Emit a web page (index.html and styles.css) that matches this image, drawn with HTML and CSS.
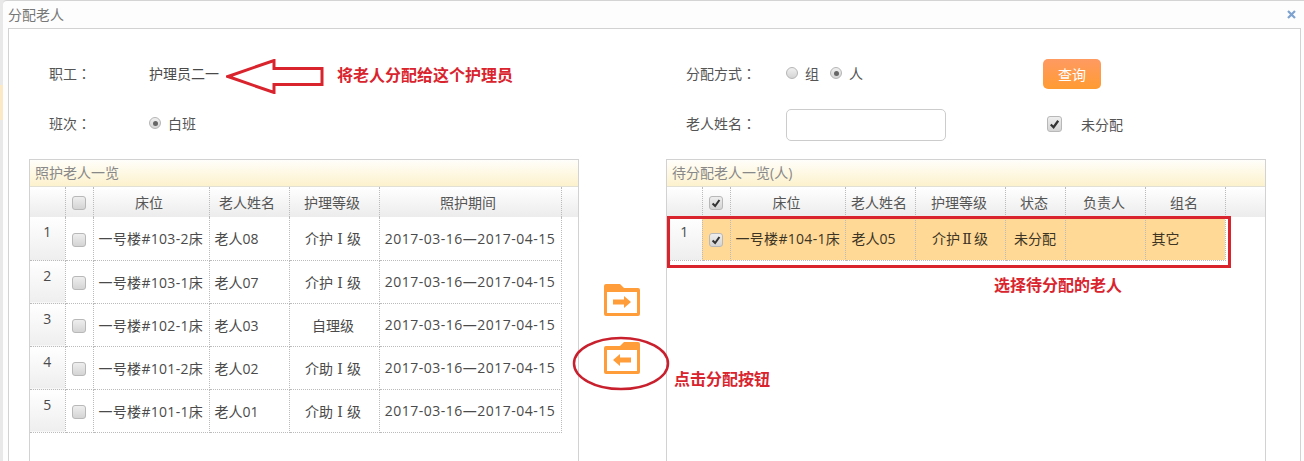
FILE: index.html
```html
<!DOCTYPE html>
<html lang="zh-CN">
<head>
<meta charset="utf-8">
<title>分配老人</title>
<link rel="stylesheet" href="styles.css">
</head>
<body>
<div class="backdrop-accent"></div>
<div class="window">
  <div class="titlebar">
    <span class="window-title">分配老人</span>
    <svg class="close" viewBox="0 0 9 9"><path d="M1 1l7 7M8 1l-7 7"/></svg>
  </div>
  <div class="content">
    <div class="form">
      <span class="label">职工<span class="colon" lang="zh-TW">：</span></span>
      <span class="value">护理员二一</span>
      <span class="label">分配方式<span class="colon" lang="zh-TW">：</span></span>
      <span class="value options">
        <span class="radio"></span><span class="opt-text">组</span>
        <span class="radio on"></span><span class="opt-text">人</span>
      </span>
      <span class="action"><button class="query">查询</button></span>

      <span class="label">班次<span class="colon" lang="zh-TW">：</span></span>
      <span class="value options"><span class="radio on"></span><span class="opt-text">白班</span></span>
      <span class="label">老人姓名<span class="colon" lang="zh-TW">：</span></span>
      <span class="field"><input class="name-input" type="text"></span>
      <span class="action check-line">
        <span class="cb big on"><svg viewBox="0 0 14 14"><path d="M3 7.500l3 3 5-7"/></svg></span>
        <span class="check-text">未分配</span>
      </span>
    </div>

    <div class="lists">
      <section class="panel left">
        <h2 class="panel-title">照护老人一览</h2>
        <div class="panel-body">
          <table class="grid grid-left">
            <colgroup>
              <col class="c-num"><col class="c-chk"><col class="c-bed"><col class="c-name"><col class="c-level"><col class="c-period">
            </colgroup>
            <thead>
              <tr><th></th><th class="chk-head"><span class="cb"></span></th><th>床位</th><th>老人姓名</th><th>护理等级</th><th>照护期间</th></tr>
            </thead>
            <tbody>
              <tr><td class="num">1</td><td class="chk"><span class="cb"></span></td><td class="bed">一号楼#103-2床</td><td class="nm">老人08</td><td class="ctr">介护<span class="roman">Ⅰ</span>级</td><td class="ctr date">2017-03-16—2017-04-15</td></tr>
              <tr><td class="num">2</td><td class="chk"><span class="cb"></span></td><td class="bed">一号楼#103-1床</td><td class="nm">老人07</td><td class="ctr">介护<span class="roman">Ⅰ</span>级</td><td class="ctr date">2017-03-16—2017-04-15</td></tr>
              <tr><td class="num">3</td><td class="chk"><span class="cb"></span></td><td class="bed">一号楼#102-1床</td><td class="nm">老人03</td><td class="ctr">自理级</td><td class="ctr date">2017-03-16—2017-04-15</td></tr>
              <tr><td class="num">4</td><td class="chk"><span class="cb"></span></td><td class="bed">一号楼#101-2床</td><td class="nm">老人02</td><td class="ctr">介助<span class="roman">Ⅰ</span>级</td><td class="ctr date">2017-03-16—2017-04-15</td></tr>
              <tr><td class="num">5</td><td class="chk"><span class="cb"></span></td><td class="bed">一号楼#101-1床</td><td class="nm">老人01</td><td class="ctr">介助<span class="roman">Ⅰ</span>级</td><td class="ctr date">2017-03-16—2017-04-15</td></tr>
            </tbody>
          </table>
        </div>
      </section>

      <div class="transfer">
        <button class="folder-btn" aria-label="移出">
          <svg viewBox="0 0 36 32"><path class="folder" fill-rule="evenodd" d="M2 0h14l4 4h14a2 2 0 0 1 2 2v24a2 2 0 0 1-2 2H2a2 2 0 0 1-2-2V2a2 2 0 0 1 2-2zM3 8v21h30V8z"/><path class="folder" d="M9 15.500h11v-3.500l7 6-7 6v-3.500H9z"/></svg>
        </button>
        <button class="folder-btn" aria-label="分配">
          <svg viewBox="0 0 36 32"><path class="folder" fill-rule="evenodd" d="M34 0H20l-4 4H2a2 2 0 0 0-2 2v24a2 2 0 0 0 2 2h32a2 2 0 0 0 2-2V2a2 2 0 0 0-2-2zM33 8v21H3V8z"/><path class="folder" d="M27 15.500H16v-3.500l-7 6 7 6v-3.500h11z"/></svg>
        </button>
      </div>

      <section class="panel right">
        <h2 class="panel-title">待分配老人一览(人)</h2>
        <div class="panel-body">
          <table class="grid grid-right">
            <colgroup>
              <col class="c-num"><col class="c-chk"><col class="r-bed"><col class="r-name"><col class="c-level"><col class="r-state"><col class="r-owner"><col class="r-group">
            </colgroup>
            <thead>
              <tr><th></th><th class="chk-head"><span class="cb on"><svg viewBox="0 0 14 14"><path d="M3 7.500l3 3 5-7"/></svg></span></th><th>床位</th><th>老人姓名</th><th>护理等级</th><th>状态</th><th>负责人</th><th>组名</th></tr>
            </thead>
            <tbody>
              <tr class="selected"><td class="num">1</td><td class="chk"><span class="cb on"><svg viewBox="0 0 14 14"><path d="M3 7.500l3 3 5-7"/></svg></span></td><td class="bed">一号楼#104-1床</td><td class="nm">老人05</td><td class="ctr">介护<span class="roman">Ⅱ</span>级</td><td class="ctr">未分配</td><td></td><td class="nm">其它</td></tr>
            </tbody>
          </table>
        </div>
      </section>
    </div>
  </div>
</div>

<svg class="callout-arrow" viewBox="0 0 98 35"><path d="M2 17.500L48 1.500V9.500h48v16H48v8z"/></svg>
<span class="note note-staff">将老人分配给这个护理员</span>
<div class="callout-box"></div>
<span class="note note-select">选择待分配的老人</span>
<svg class="callout-ring" viewBox="0 0 98 55"><ellipse cx="49" cy="27.500" rx="47" ry="25.500"/></svg>
<span class="note note-click">点击分配按钮</span>
</body>
</html>
```
FILE: styles.css
```css
* { box-sizing: border-box; }
html, body { height: 100%; }
body {
  margin: 0;
  height: 461px;
  overflow: hidden;
  position: relative;
  background: #e8e8e8;
  font-family: "Open Sans", "Noto Sans CJK SC", sans-serif;
  font-size: 14px;
  color: #4a4a4a;
}
.backdrop-accent {
  position: absolute;
  left: 0; top: 85px;
  width: 3px; height: 35px;
  background: #fbe8c4;
}
.window {
  margin-left: 3px;
  height: 461px;
  background: #fdfdfd;
  border-top: 1px solid #d4d4d4;
  border-top-left-radius: 4px;
  padding-right: 3px;
  display: flex;
  flex-direction: column;
}
.titlebar {
  height: 27px;
  flex: none;
  display: flex;
  align-items: center;
  justify-content: space-between;
  padding: 0 5px 0 5px;
}
.window-title { color: #777; line-height: 27px; }
.close { width: 9px; height: 9px; margin-top: -1px; }
.close path { fill: none; stroke: #7ea2cf; stroke-width: 2.2; }
.content {
  flex: 1;
  margin-left: 5px;
  background: #fff;
  border: 1px solid #d2d2d2;
  border-bottom: 0;
  min-height: 0;
}
.form {
  display: grid;
  grid-template-columns: 100px 537px 100px 257px 1fr;
  grid-auto-rows: 50px;
  padding: 20px 0 0 40px;
  align-items: center;
}
.label, .value, .check-text, .opt-text { color: #555; }
.label, .value { padding-bottom: 2px; }
.value { color: #4a4a4a; }
.colon { font-family: "Noto Sans CJK TC", sans-serif; }
.options { display: flex; align-items: center; }
.opt-text { margin: 0 11px 0 7px; }
.radio {
  width: 12px; height: 12px;
  border-radius: 50%;
  border: 1px solid #b5b5b5;
  background: linear-gradient(#f0f0f0, #d4d4d4);
  flex: none;
  position: relative;
}
.radio.on::after {
  content: "";
  position: absolute;
  left: 2.500px; top: 2.500px;
  width: 5px; height: 5px;
  border-radius: 50%;
  background: #666;
}
.query {
  width: 58px; height: 30px;
  border: 0;
  border-radius: 5px;
  background: linear-gradient(#ff9a62, #ff9b32);
  color: #fff;
  font: inherit;
  padding: 0;
  display: block;
}
.field { display: block; padding-top: 2px; }
.name-input {
  display: block;
  width: 160px; height: 32px;
  border: 1px solid #ccc;
  border-radius: 5px;
  background: #fff;
}
.check-line { display: flex; align-items: center; padding-left: 4px; }
.check-text { margin-left: 19px; }
.cb {
  display: inline-block;
  width: 14px; height: 14px;
  border: 1px solid #b8b8b8;
  border-radius: 3px;
  background: linear-gradient(#eee, #d4d4d4);
  vertical-align: middle;
  flex: none;
}
.cb.big { width: 15px; height: 16px; }
.cb svg { display: block; width: 100%; height: 100%; }
.cb path { fill: none; stroke: #333; stroke-width: 2.4; }
.lists {
  display: flex;
  align-items: flex-start;
  margin: 10px 0 0 20px;
}
.panel {
  height: 320px;
  border: 1px solid #d2d2d2;
  background: #fff;
  flex: none;
}
.panel.left { width: 550px; }
.panel.right { width: 600px; }
.panel-title {
  margin: 0;
  height: 27px;
  font-weight: 400;
  font-size: 14px;
  line-height: 26px;
  padding-left: 5px;
  color: #888;
  background: linear-gradient(#fffefa, #fdf2cd);
  border-bottom: 1px solid #e2e0d4;
}
.panel-body {
  height: 290px;
  background: linear-gradient(#fff, #ececec) no-repeat 0 0 / 100% 30px;
}
.transfer {
  width: 87px;
  flex: none;
  display: flex;
  flex-direction: column;
  align-items: center;
  gap: 26px;
  padding-top: 125px;
}
.folder-btn {
  border: 0;
  background: none;
  padding: 0;
  width: 36px;
  height: 32px;
  margin-left: -1px;
}
.folder-btn svg { display: block; width: 36px; height: 32px; }
.folder { fill: #ff9d3b; }
.grid {
  table-layout: fixed;
  border-collapse: collapse;
}
.grid-left { width: 531px; }
.grid-right { width: 558px; }
.c-num { width: 35px; }
.c-chk { width: 28px; }
.c-bed { width: 116px; }
.c-name { width: 80px; }
.c-level { width: 90px; }
.c-period { width: 182px; }
.r-bed { width: 115px; }
.r-name { width: 70px; }
.r-state { width: 60px; }
.r-owner { width: 80px; }
.r-group { width: 80px; }
.grid th {
  height: 30px;
  padding: 0 2px 1px 0;
  font-weight: 400;
  color: #555;
  border-right: 1px dotted #bbb;
}
.grid-left th { padding-right: 4px; }
.grid th.chk-head { padding-right: 0; }
.grid td {
  height: 43px;
  padding: 0;
  white-space: nowrap;
  border-right: 1px dotted #bbb;
  border-bottom: 1px dotted #bbb;
}
.grid td.num {
  vertical-align: top;
  text-align: center;
  padding-top: 5px;
  background: linear-gradient(#fff, #eee);
}
.grid td.chk { text-align: center; }
.grid td.bed { padding-left: 5px; letter-spacing: .3px; }
.grid td.nm { padding-left: 6px; }
.grid-left td.nm { padding-left: 5px; }
.grid td.ctr { text-align: center; }
.grid-left td.ctr { padding-right: 2px; }
.grid td.date { letter-spacing: .5px; padding-right: 0; }
.roman { font-family: "DejaVu Serif", serif; display: inline-block; width: 14px; text-align: center; }
.selected td { background: #ffd995; color: #3c3425; }
.selected td.num { color: #4a4a4a; }

.callout-arrow { position: absolute; left: 226px; top: 59px; width: 98px; height: 35px; }
.callout-arrow path { fill: #fff; stroke: #d9242e; stroke-width: 3; }
.callout-box {
  position: absolute;
  left: 667px; top: 216px;
  width: 564px; height: 52px;
  border: 3px solid #d9242e;
}
.callout-ring { position: absolute; left: 572px; top: 336px; width: 98px; height: 55px; }
.callout-ring ellipse { fill: none; stroke: #c9202e; stroke-width: 2.500; }
.note {
  position: absolute;
  font-size: 16px;
  font-weight: 700;
  line-height: 20px;
  color: #d9242e;
  white-space: nowrap;
}
.note-staff { left: 337px; top: 65px; }
.note-select { left: 994px; top: 275px; }
.note-click { left: 674px; top: 369px; }
```
